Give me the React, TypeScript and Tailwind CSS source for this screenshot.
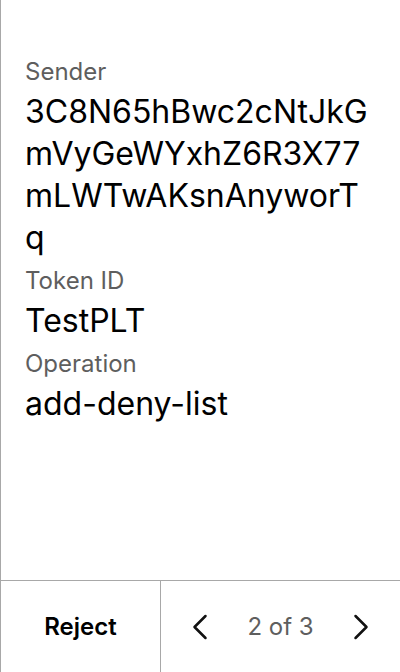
import React from 'react';

const fields = [
  { label: 'Sender', value: '3C8N65hBwc2cNtJkGmVyGeWYxhZ6R3X77mLWTwAKsnAnyworTq' },
  { label: 'Token ID', value: 'TestPLT' },
  { label: 'Operation', value: 'add-deny-list' },
];

const Chevron = ({ dir }: { dir: 'left' | 'right' }) => (
  <svg width="18" height="28" viewBox="0 0 18 28" fill="none" stroke="#111" strokeWidth="2.5" strokeLinecap="round" strokeLinejoin="round">
    {dir === 'left' ? <path d="M14.5 3 L3.5 14 L14.5 25" /> : <path d="M3.5 3 L14.5 14 L3.5 25" />}
  </svg>
);

export default function App() {
  return (
    <div className="w-[400px] h-[672px] flex flex-col bg-white border-l border-[#a8a8a8] font-['Inter',sans-serif] text-black">
      {/* Details */}
      <div className="flex-1 pl-6 pr-[28px] pt-[56px] flex flex-col gap-[6px]">
        {fields.map((f) => (
          <div key={f.label} className="flex flex-col">
            <span className="text-[24px] leading-[32px] text-[#5e5e5e]">{f.label}</span>
            <span className="mt-[3px] text-[32px] leading-[42px] break-all">{f.value}</span>
          </div>
        ))}
      </div>

      {/* Bottom bar */}
      <div className="h-[92px] flex border-t border-[#a8a8a8]">
        <button className="w-[160px] flex items-center justify-center border-r border-[#a8a8a8] text-[24px] font-semibold">
          Reject
        </button>
        <div className="flex-1 flex items-center justify-between pl-[30px] pr-[30px]">
          <Chevron dir="left" />
          <span className="text-[24px] text-[#5e5e5e]">2 of 3</span>
          <Chevron dir="right" />
        </div>
      </div>
    </div>
  );
}
